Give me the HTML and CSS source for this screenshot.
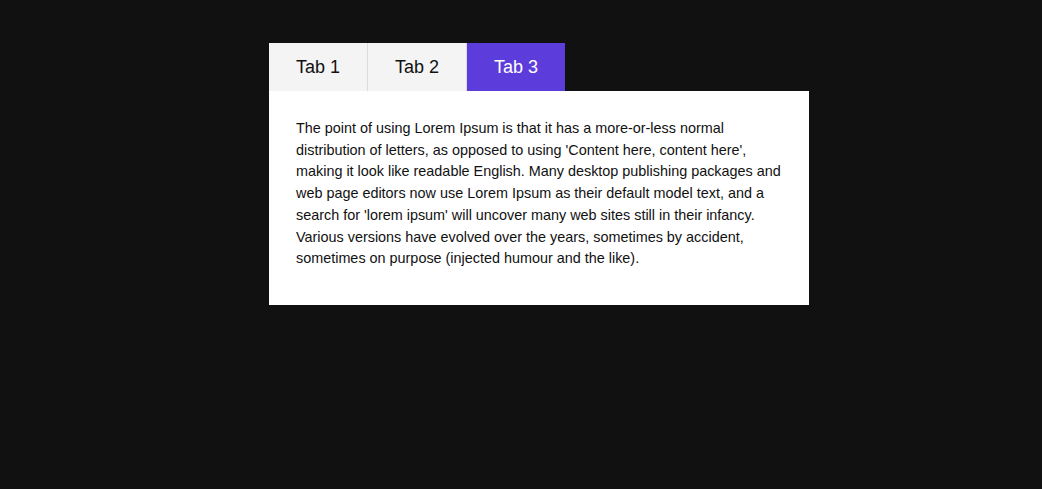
FILE: index.html
```html
<!DOCTYPE html>
<html>
<head>
<meta charset="utf-8">
<link rel="stylesheet" href="styles.css">
</head>
<body>
<div class="tabs">
  <div class="tab-bar">
    <button class="tab">Tab 1</button>
    <button class="tab">Tab 2</button>
    <button class="tab active">Tab 3</button>
  </div>
  <div class="panel">
    <p>The point of using Lorem Ipsum is that it has a more-or-less normal distribution of letters, as opposed to using 'Content here, content here', making it look like readable English. Many desktop publishing packages and web page editors now use Lorem Ipsum as their default model text, and a search for 'lorem ipsum' will uncover many web sites still in their infancy. Various versions have evolved over the years, sometimes by accident, sometimes on purpose (injected humour and the like).</p>
  </div>
</div>
</body>
</html>
```
FILE: styles.css
```css
html, body {
  margin: 0;
  padding: 0;
  background: #111111;
  font-family: "Liberation Sans", Arial, sans-serif;
}
body {
  width: 1042px;
  height: 489px;
}
.tabs {
  width: 540px;
  padding-top: 43px;
  margin-left: 269px;
}
.tab-bar {
  display: flex;
}
.tab {
  width: 99px;
  height: 48px;
  border: none;
  border-right: 1px solid #dcdcdc;
  background: #f4f4f4;
  color: #111;
  font-family: "Liberation Sans", Arial, sans-serif;
  font-size: 18px;
  padding: 0;
  margin: 0;
}
.tab.active {
  width: 98px;
  border-right: none;
  background: #5c3ddb;
  color: #fff;
}
.panel {
  background: #fff;
  padding: 27px 27px 35px;
}
.panel p {
  margin: 0;
  font-size: 14.4px;
  line-height: 21.7px;
  color: #111;
}
```
